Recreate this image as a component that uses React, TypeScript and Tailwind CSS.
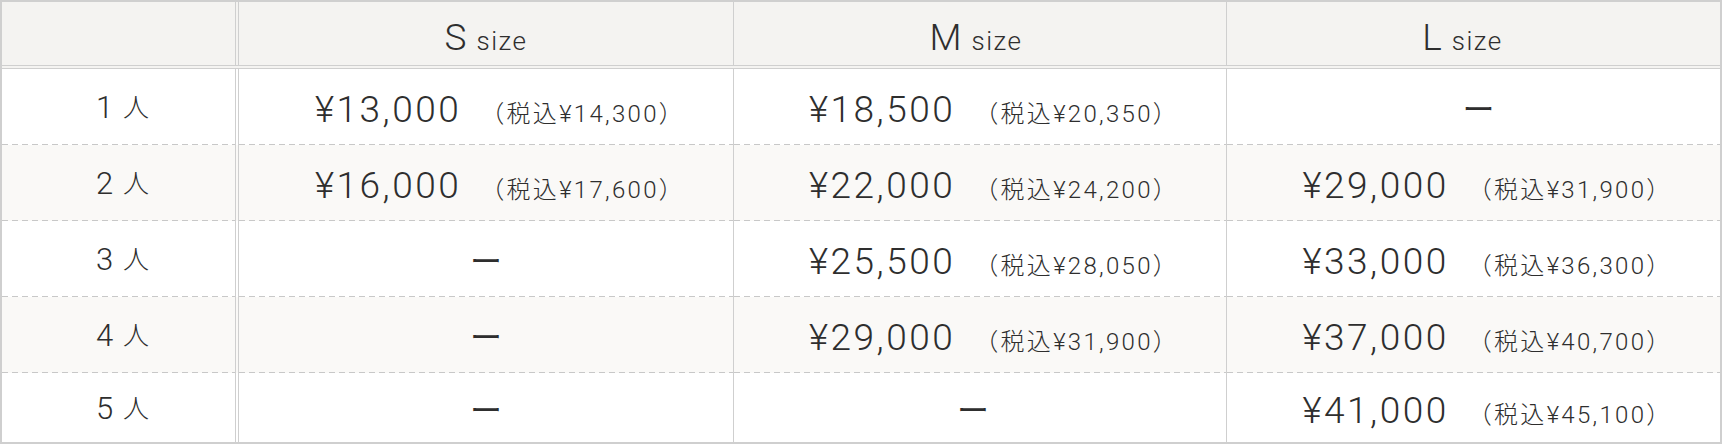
import React from "react";

type Price = [string, string] | null;

const rows: { n: string; cells: Price[] }[] = [
  { n: "1", cells: [["¥13,000", "¥14,300"], ["¥18,500", "¥20,350"], null] },
  { n: "2", cells: [["¥16,000", "¥17,600"], ["¥22,000", "¥24,200"], ["¥29,000", "¥31,900"]] },
  { n: "3", cells: [null, ["¥25,500", "¥28,050"], ["¥33,000", "¥36,300"]] },
  { n: "4", cells: [null, ["¥29,000", "¥31,900"], ["¥37,000", "¥40,700"]] },
  { n: "5", cells: [null, null, ["¥41,000", "¥45,100"]] },
];

const widths = ["w-[494px]", "w-[493px] border-l border-[#cfcfcf]", "flex-1 border-l border-[#cfcfcf]"];
const headPad = ["", "pr-[8px]", "pr-[22px]"];
const dashPad = ["", "pr-[14px]", "pl-[10px]"];

function Dashed() {
  return (
    <div className="h-px w-full shrink-0 bg-[repeating-linear-gradient(to_right,#c8c8c8_0px,#c8c8c8_6px,transparent_6px,transparent_10px)]" />
  );
}

function PriceCell({ p, ci }: { p: Price; ci: number }) {
  if (!p) {
    return <span className={`text-[32px] font-['Noto_Sans_CJK_JP',sans-serif] font-normal ${dashPad[ci]}`}>ー</span>;
  }
  return (
    <div className="flex items-baseline pl-[28px] pt-[6px]">
      <span className="text-[37px] tracking-[2.5px]">{p[0]}</span>
      <span className="ml-[19px] text-[24px] tracking-[2.3px]">（税込{p[1]}）</span>
    </div>
  );
}

export default function App() {
  return (
    <div className="w-[1722px] h-[445px] bg-white text-[#2e2e2e] font-light font-['Roboto','Noto_Sans_CJK_JP',sans-serif]">
      <div className="flex flex-col border-2 border-[#cfcfcf]">
        <div className="flex h-[67px] shrink-0 border-b-4 border-double border-[#cfcfcf] bg-[#f4f3f1]">
          <div className="w-[237px] border-r-4 border-double border-[#cfcfcf]" />
          {["S", "M", "L"].map((s, i) => (
            <div key={s} className={`${widths[i]} flex items-baseline justify-center pt-[17px]`}>
              <div className={`flex items-baseline ${headPad[i]}`}>
                <span className="text-[37px] leading-none">{s}</span>
                <span className="ml-[10px] text-[26px] leading-none tracking-[1.5px]">size</span>
              </div>
            </div>
          ))}
        </div>
        {rows.map((r, ri) => {
          const last = ri === rows.length - 1;
          const bg = ri % 2 === 1 ? "bg-[#faf9f7]" : "bg-white";
          return (
            <div key={r.n} className={`flex ${bg}`}>
              <div className="w-[237px] border-r-4 border-double border-[#cfcfcf] flex flex-col">
                <div className={`${last ? "h-[69px]" : "h-[75px]"} shrink-0 flex items-center justify-center text-[31px] pl-[8px] pt-[3px]`}>
                  <span>{r.n}</span>
                  <span className="ml-[10px] text-[26px]">人</span>
                </div>
                {!last && <Dashed />}
              </div>
              {r.cells.map((c, ci) => (
                <div key={ci} className={`${widths[ci]} flex flex-col`}>
                  <div className={`${last ? "h-[69px]" : "h-[75px]"} shrink-0 flex items-center justify-center`}>
                    <PriceCell p={c} ci={ci} />
                  </div>
                  {!last && <Dashed />}
                </div>
              ))}
            </div>
          );
        })}
      </div>
    </div>
  );
}
